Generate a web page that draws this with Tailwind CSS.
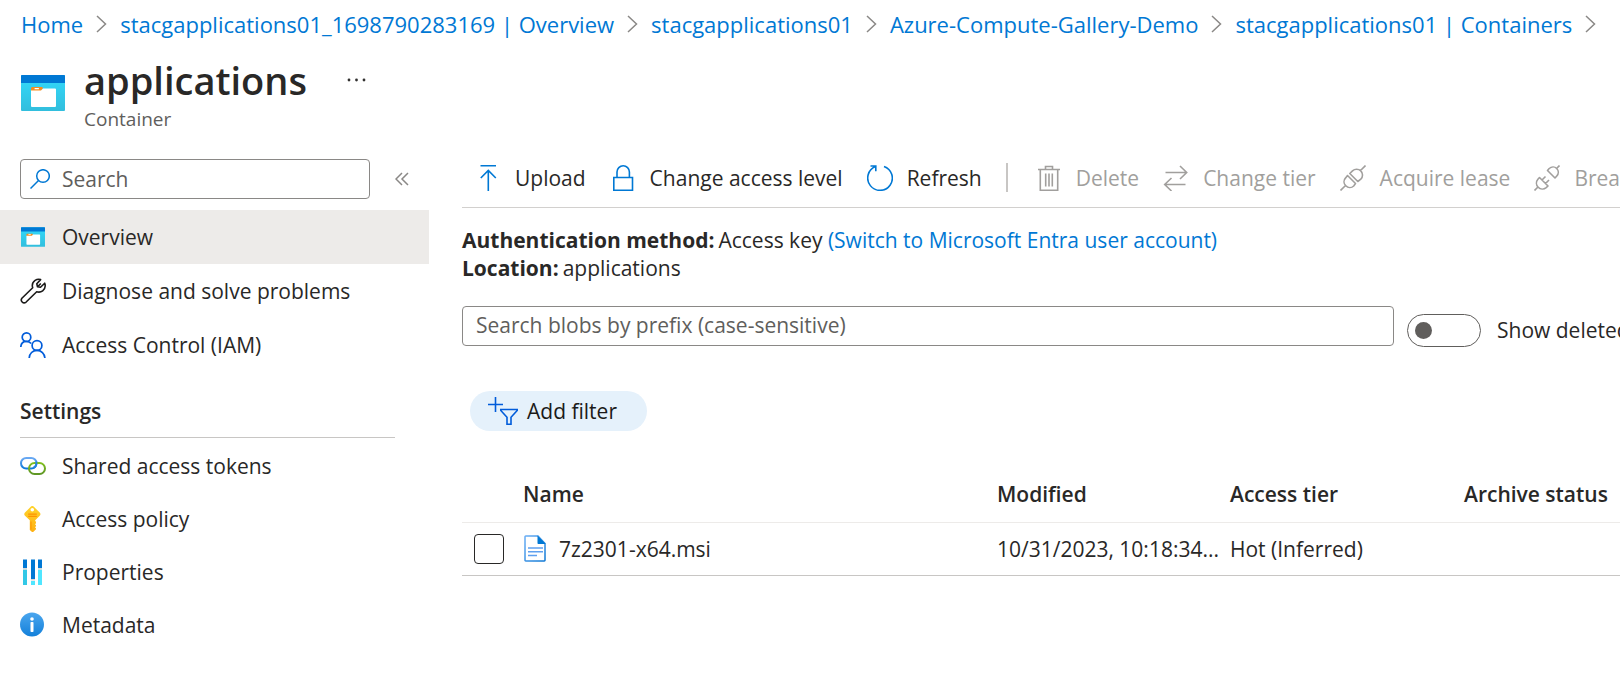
<!DOCTYPE html>
<html lang="en">
<head>
<meta charset="utf-8">
<meta name="viewport" content="width=device-width, initial-scale=1">
<title>applications - Container</title>
<script src="https://cdn.jsdelivr.net/npm/@tailwindcss/browser@4"></script>
</head>
<body class="min-h-screen overflow-x-hidden bg-white font-['Open_Sans',sans-serif] text-[21px] leading-7 text-[#292827]">
<svg class="absolute size-0" aria-hidden="true">
  <defs>
    <linearGradient id="cyan" x1="0" y1="0" x2="0" y2="1"><stop offset="0.2" stop-color="#32d4f5"/><stop offset="1" stop-color="#32bedd"/></linearGradient>
    <linearGradient id="info" x1="0" y1="0" x2="0" y2="1"><stop offset="0" stop-color="#4ba6ee"/><stop offset="1" stop-color="#1380da"/></linearGradient>
    <linearGradient id="gold" x1="0" y1="0" x2="0" y2="1"><stop offset="0" stop-color="#ffd32a"/><stop offset="1" stop-color="#feb012"/></linearGradient>
    <linearGradient id="chainblue" x1="0" y1="0" x2="0" y2="1"><stop offset="0" stop-color="#6aa9f3"/><stop offset="1" stop-color="#0f7ad8"/></linearGradient>
    <linearGradient id="chaingreen" x1="0" y1="0" x2="0" y2="1"><stop offset="0" stop-color="#80bf20"/><stop offset="1" stop-color="#5e9624"/></linearGradient>
    <linearGradient id="docblue" x1="0" y1="0" x2="1" y2="1"><stop offset="0" stop-color="#6aaef5"/><stop offset="1" stop-color="#0f78d4"/></linearGradient>
    <symbol id="chevron" viewBox="0 0 11 18"><path d="M1 1l8.500 8L1 17" fill="none" stroke="#8a8886" stroke-width="1.500"/></symbol>
    <symbol id="container" viewBox="0 0 44 36">
      <rect width="44" height="36" rx="1" fill="url(#cyan)"/>
      <path d="M1 0h42a1 1 0 0 1 1 1v7H0V1a1 1 0 0 1 1-1z" fill="#0078d4"/>
      <path d="M11 12h10l1 1-1.500 3H10v-3z" fill="#f78d1e"/>
      <path d="M10 15.500h10l2-2h12a1 1 0 0 1 1 1V31a1 1 0 0 1-1 1H11a1 1 0 0 1-1-1z" fill="#fff"/>
      <rect x="13.500" y="13" width="4.500" height="1.300" rx=".6" fill="#fff"/>
    </symbol>
  </defs>
</svg>

<nav aria-label="Breadcrumb" class="h-12 overflow-hidden pl-[21px] text-[22px]">
  <ol class="flex h-[47px] items-center gap-[13px] whitespace-nowrap text-[#0078d4]">
    <li><a href="#">Home</a></li>
    <li aria-hidden="true"><svg class="h-[18px] w-[11px]"><use href="#chevron"/></svg></li>
    <li><a href="#">stacgapplications01_1698790283169 | Overview</a></li>
    <li aria-hidden="true"><svg class="h-[18px] w-[11px]"><use href="#chevron"/></svg></li>
    <li><a href="#">stacgapplications01</a></li>
    <li aria-hidden="true"><svg class="h-[18px] w-[11px]"><use href="#chevron"/></svg></li>
    <li><a href="#">Azure-Compute-Gallery-Demo</a></li>
    <li aria-hidden="true"><svg class="h-[18px] w-[11px]"><use href="#chevron"/></svg></li>
    <li><a href="#">stacgapplications01 | Containers</a></li>
    <li aria-hidden="true"><svg class="h-[18px] w-[11px]"><use href="#chevron"/></svg></li>
  </ol>
</nav>

<header class="flex h-[111px] items-start pl-[21px]">
  <svg class="mt-[27px] h-9 w-11 shrink-0" aria-hidden="true"><use href="#container"/></svg>
  <div class="ml-[19px] pt-[7px]">
    <h1 class="text-[38px] leading-[50px] font-semibold">applications</h1>
    <p class="text-[19px] leading-7 text-[#605e5c]">Container</p>
  </div>
  <button type="button" aria-label="More" class="mt-[30px] ml-10">
    <svg class="h-1 w-5" viewBox="0 0 20 4" fill="#323130"><circle cx="2" cy="2" r="1.400"/><circle cx="9.500" cy="2" r="1.400"/><circle cx="17" cy="2" r="1.400"/></svg>
  </button>
</header>

<div class="flex">
  <aside class="w-[429px] shrink-0">
    <div class="flex items-center pl-5">
      <label class="flex h-10 w-[350px] items-center gap-3 rounded border border-[#8a8886] px-[9px]">
        <svg class="size-5 shrink-0" viewBox="0 0 20 20" fill="none" stroke="#0078d4" stroke-width="1.500" aria-hidden="true"><circle cx="13" cy="7" r="6.300"/><path d="M8.500 11.500L.5 19.500"/></svg>
        <input type="search" aria-label="Search" placeholder="Search" class="w-full min-w-0 outline-none placeholder:text-[#605e5c] placeholder:opacity-100">
      </label>
      <button type="button" aria-label="Collapse menu" class="ml-[25px]">
        <svg class="h-3.5 w-3.5" viewBox="0 0 14 14" fill="none" stroke="#8a8886" stroke-width="1.500"><path d="M7 1L1 7l6 6M13 1L7 7l6 6"/></svg>
      </button>
    </div>

    <nav aria-label="Container menu" class="mt-[11px]">
      <ul>
        <li><a href="#" aria-current="page" class="flex h-[54px] items-center gap-4 bg-[#edebe9] pl-5">
          <svg class="mx-px h-5 w-6" aria-hidden="true"><use href="#container"/></svg>Overview</a></li>
        <li><a href="#" class="flex h-[54px] items-center gap-4 pl-5">
          <svg class="size-[26px]" viewBox="0 0 26 26" fill="none" stroke="#1b1a19" stroke-width="1.600" stroke-linejoin="round" aria-hidden="true"><path d="M20.600 1.600C17 .2 12.300 3 12.300 7.500c0 .8.100 1.500.4 2.200L1.900 20.200a2.900 2.900 0 0 0 4 4.100L16.700 13.700c4.500 1.500 8.600-1.900 8.500-6 0-.9-.2-1.800-.5-2.500l-4.200 4.100-3-.5-.7-3.100z"/><path d="M20.800 5.500l-3 3"/></svg>Diagnose and solve problems</a></li>
        <li><a href="#" class="flex h-[54px] items-center gap-4 pl-5">
          <svg class="size-[26px]" viewBox="0 0 26 26" fill="none" stroke="#015cda" stroke-width="1.700" aria-hidden="true"><circle cx="6.500" cy="5.200" r="4.300"/><path d="M.8 15c.2-3.400 2.500-5.600 5.700-5.600 2 0 3.700.9 4.700 2.200"/><circle cx="17" cy="13.500" r="4.900"/><path d="M9.200 26c.2-4.500 3.500-7.600 7.800-7.600s7.600 3.100 7.900 7.600"/></svg>Access Control (IAM)</a></li>
      </ul>
      <h2 class="mt-[25px] ml-5 mr-[34px] border-b border-[#c8c6c4] pb-3 font-semibold">Settings</h2>
      <ul class="mt-px">
        <li><a href="#" class="flex h-[53px] items-center gap-4 pl-5">
          <svg class="size-[26px]" viewBox="0 0 26 26" fill="none" stroke-width="2" aria-hidden="true"><rect x="1" y="5" width="15.500" height="10.500" rx="5.200" stroke="url(#chainblue)"/><rect x="9" y="10" width="16" height="11" rx="5.500" stroke="url(#chaingreen)"/><path d="M16.300 8.700c.5 2.800-.8 5.200-3 6.300" stroke="#2384de"/></svg>Shared access tokens</a></li>
        <li><a href="#" class="flex h-[53px] items-center gap-4 pl-5">
          <svg class="size-[26px]" viewBox="0 0 26 26" aria-hidden="true"><path d="M10.700.8a2.200 2.200 0 0 1 3.200 0l5.800 5.800c1 1 1 2.200 0 3.200l-4.500 4.500v.7l.8.800v1.500l-1 1 1 1v1l-1 1 1 1v1l-2.300 2.300c-.7.700-1.600.7-2.200 0l-1.700-1.700v-9.600L5 9.800c-1-1-1-2.200 0-3.200z" fill="url(#gold)"/><circle cx="12.300" cy="3.800" r="1.800" fill="#fff"/><rect x="8" y="7.500" width="9" height="1.200" rx=".6" fill="#ff9300"/><rect x="8" y="9.700" width="9" height="1.200" rx=".6" fill="#ff9300"/><path d="M11 15.500v8" stroke="#ff9300"/></svg>Access policy</a></li>
        <li><a href="#" class="flex h-[53px] items-center gap-4 pl-5">
          <svg class="size-[26px]" viewBox="0 0 26 26" aria-hidden="true"><path d="M3 .5h4V9H3zM11 .5h4v19.500h-4zM18 .5h4V9h-4z" fill="#0078d4"/><path d="M3 10.500h4V26H3z" fill="#32c8e6"/><path d="M11 22h4v4h-4zM18 10.500h4V26h-4z" fill="#50e6ff"/><path d="M3 9h4v1.500H3zM18 9h4v1.500h-4zM11 20h4v1.500h-4z" fill="#d8d8d8"/></svg>Properties</a></li>
        <li><a href="#" class="flex h-[53px] items-center gap-4 pl-5">
          <svg class="size-[26px]" viewBox="0 0 26 26" aria-hidden="true"><circle cx="12" cy="12.500" r="12" fill="url(#info)"/><circle cx="12" cy="7" r="1.800" fill="#fff"/><rect x="10.500" y="10" width="3" height="10" rx=".8" fill="#fff"/></svg>Metadata</a></li>
      </ul>
    </nav>
  </aside>

  <main class="ml-[33px] min-w-0 flex-1">
    <div role="toolbar" aria-label="Container commands" class="flex h-[49px] items-start gap-6 overflow-hidden border-b border-[#d2d0ce] pl-[13px] whitespace-nowrap">
      <button type="button" class="flex h-[38px] shrink-0 items-center gap-[14px]">
        <svg class="size-[26px]" viewBox="0 0 26 26" fill="none" stroke="#0078d4" stroke-width="1.600" aria-hidden="true"><path d="M5.500.8h15.500M13.300 26V5.500M5.800 13l7.500-7.500 7.500 7.500"/></svg>Upload</button>
      <button type="button" class="flex h-[38px] shrink-0 items-center gap-[14px]">
        <svg class="size-[26px]" viewBox="0 0 26 26" fill="none" stroke="#0078d4" stroke-width="1.600" aria-hidden="true"><path d="M3.800 12.500h18.700v12.700H3.800zM7 12.500V7a6.200 6.200 0 0 1 12.400 0v5.500"/></svg>Change access level</button>
      <button type="button" class="flex h-[38px] shrink-0 items-center gap-[14px]">
        <svg class="size-[26px]" viewBox="0 0 26 26" fill="none" stroke="#0078d4" stroke-width="1.600" aria-hidden="true"><path d="M17 1.400a12.300 12.300 0 1 1-8.500.2M3.500 1h5.300v5.300"/></svg>Refresh</button>
      <div class="mt-1 mr-1 h-[29px] w-0.5 shrink-0 bg-[#c8c6c4]"></div>
      <button type="button" disabled class="flex h-[38px] shrink-0 items-center gap-[14px] text-[#a19f9d]">
        <svg class="size-[26px]" viewBox="0 0 26 26" fill="none" stroke="currentColor" stroke-width="1.600" aria-hidden="true"><path d="M2 4.500h22M9.500 4.500V1.500h7v3M4.300 4.500v20.700h17.400V4.500M9.700 8.500v13M13 8.500v13M16.300 8.500v13"/></svg>Delete</button>
      <button type="button" disabled class="flex h-[38px] shrink-0 items-center gap-[14px] text-[#a19f9d]">
        <svg class="size-[26px]" viewBox="0 0 26 26" fill="none" stroke="currentColor" stroke-width="1.600" aria-hidden="true"><path d="M2.500 7.500h21M17 1l6.700 6.500L17 14M22.500 19.500h-21M8.500 13l-6.800 6.500L8.500 26"/></svg>Change tier</button>
      <button type="button" disabled class="flex h-[38px] shrink-0 items-center gap-[14px] text-[#a19f9d]">
        <svg class="size-[26px]" viewBox="0 0 26 26" fill="none" stroke="currentColor" stroke-width="1.600" stroke-linejoin="round" aria-hidden="true"><path d="M.5 25.500l5.300-5.300M7.500 10.500l8 8-1.800 2.500c-2.300 2.200-5.700 2-7.900-.2s-2.400-5.600-.2-7.900zM9.800 8.500l8 8 3-2.300c2.300-2.300 2.300-6 0-8.300s-6-2.300-8.300 0zM20.500 5.500l5-5"/></svg>Acquire lease</button>
      <button type="button" disabled class="flex h-[38px] shrink-0 items-center gap-[14px] text-[#a19f9d]">
        <svg class="size-[26px]" viewBox="0 0 26 26" fill="none" stroke="currentColor" stroke-width="1.600" stroke-linejoin="round" aria-hidden="true"><path d="M.5 25.500l3.200-3.200M5.500 12.500l8.500 8.500-1.800 1.600c-2.400 2-5.800 1.900-8-.3s-2.300-5.600-.3-8zM8 15l3.500-3.500M11.500 18.500L15 15M13.500 5.500l7.500 7.500 1.800-2c2-2.300 2-5.400-.1-7.500s-5.200-2-7.500 0zM22.500 3.500l3-3"/></svg>Break lease</button>
    </div>

    <div class="mt-[18px]">
      <p><strong class="mr-1 font-bold">Authentication method:</strong>Access key <a href="#" class="text-[#0078d4]">(Switch to Microsoft Entra user account)</a></p>
      <p><strong class="mr-1 font-bold">Location:</strong>applications</p>
    </div>

    <div class="mt-6 flex items-start gap-[13px]">
      <input type="search" aria-label="Search blobs" placeholder="Search blobs by prefix (case-sensitive)" class="h-10 min-w-0 flex-1 rounded border border-[#8a8886] px-[13px] pb-0.5 placeholder:text-[#605e5c] placeholder:opacity-100">
      <label class="mt-2 flex w-[213px] shrink-0 items-center gap-4 overflow-hidden whitespace-nowrap">
        <input type="checkbox" role="switch" class="peer sr-only">
        <span class="flex h-[33px] w-[74px] shrink-0 items-center rounded-full border border-[#605e5c] px-[7px]"><span class="size-[17px] rounded-full bg-[#605e5c]"></span></span>
        <span class="pb-0.5">Show deleted blobs</span>
      </label>
    </div>

    <button type="button" class="mt-11 ml-2 flex h-10 items-center gap-2 rounded-full bg-[#e5f1fb] pr-[30px] pl-[18px] text-[#1b1a19]">
      <svg class="h-7 w-[31px]" viewBox="0 0 31 28" fill="none" stroke="#015cda" stroke-width="1.600" aria-hidden="true"><path d="M0 7.500h15M7.500 0v15M12.800 12.500h16.400v1l-6.200 6.700v7.200h-4v-7.200l-6.200-6.700z"/></svg>Add filter</button>

    <table class="mt-9 w-full table-fixed text-left whitespace-nowrap">
      <colgroup><col class="w-[61px]"><col><col class="w-[233px]"><col class="w-[234px]"><col class="w-[156px]"></colgroup>
      <thead>
        <tr class="h-[55px] border-b border-[#edebe9]">
          <th></th><th class="font-semibold">Name</th><th class="font-semibold">Modified</th><th class="font-semibold">Access tier</th><th class="font-semibold">Archive status</th>
        </tr>
      </thead>
      <tbody>
        <tr class="h-[53px] border-b border-[#c8c6c4]">
          <td class="pl-3"><input type="checkbox" aria-label="Select 7z2301-x64.msi" class="block size-[30px] appearance-none rounded border border-[#292827] checked:bg-[#0078d4]"></td>
          <td><a href="#" class="flex items-center gap-[13px]">
            <svg class="ml-px h-[27px] w-[22px]" viewBox="0 0 22 27" aria-hidden="true"><path d="M1.700 1H14l7 7.500v16.800a.7.700 0 0 1-.7.700H1.700a.7.700 0 0 1-.7-.7V1.700A.7.700 0 0 1 1.700 1z" fill="#fff" stroke="url(#docblue)" stroke-width="1.500"/><path d="M13.500.5L21.700 9h-7.500a.7.700 0 0 1-.7-.7z" fill="#0078d4"/><path d="M4 13h15M4 16.700h15M4 20.400h9" stroke="#5ea0ef" stroke-width="1.500"/></svg>7z2301-x64.msi</a></td>
          <td>10/31/2023, 10:18:34...</td><td>Hot (Inferred)</td><td></td>
        </tr>
      </tbody>
    </table>
  </main>
</div>
</body>
</html>
